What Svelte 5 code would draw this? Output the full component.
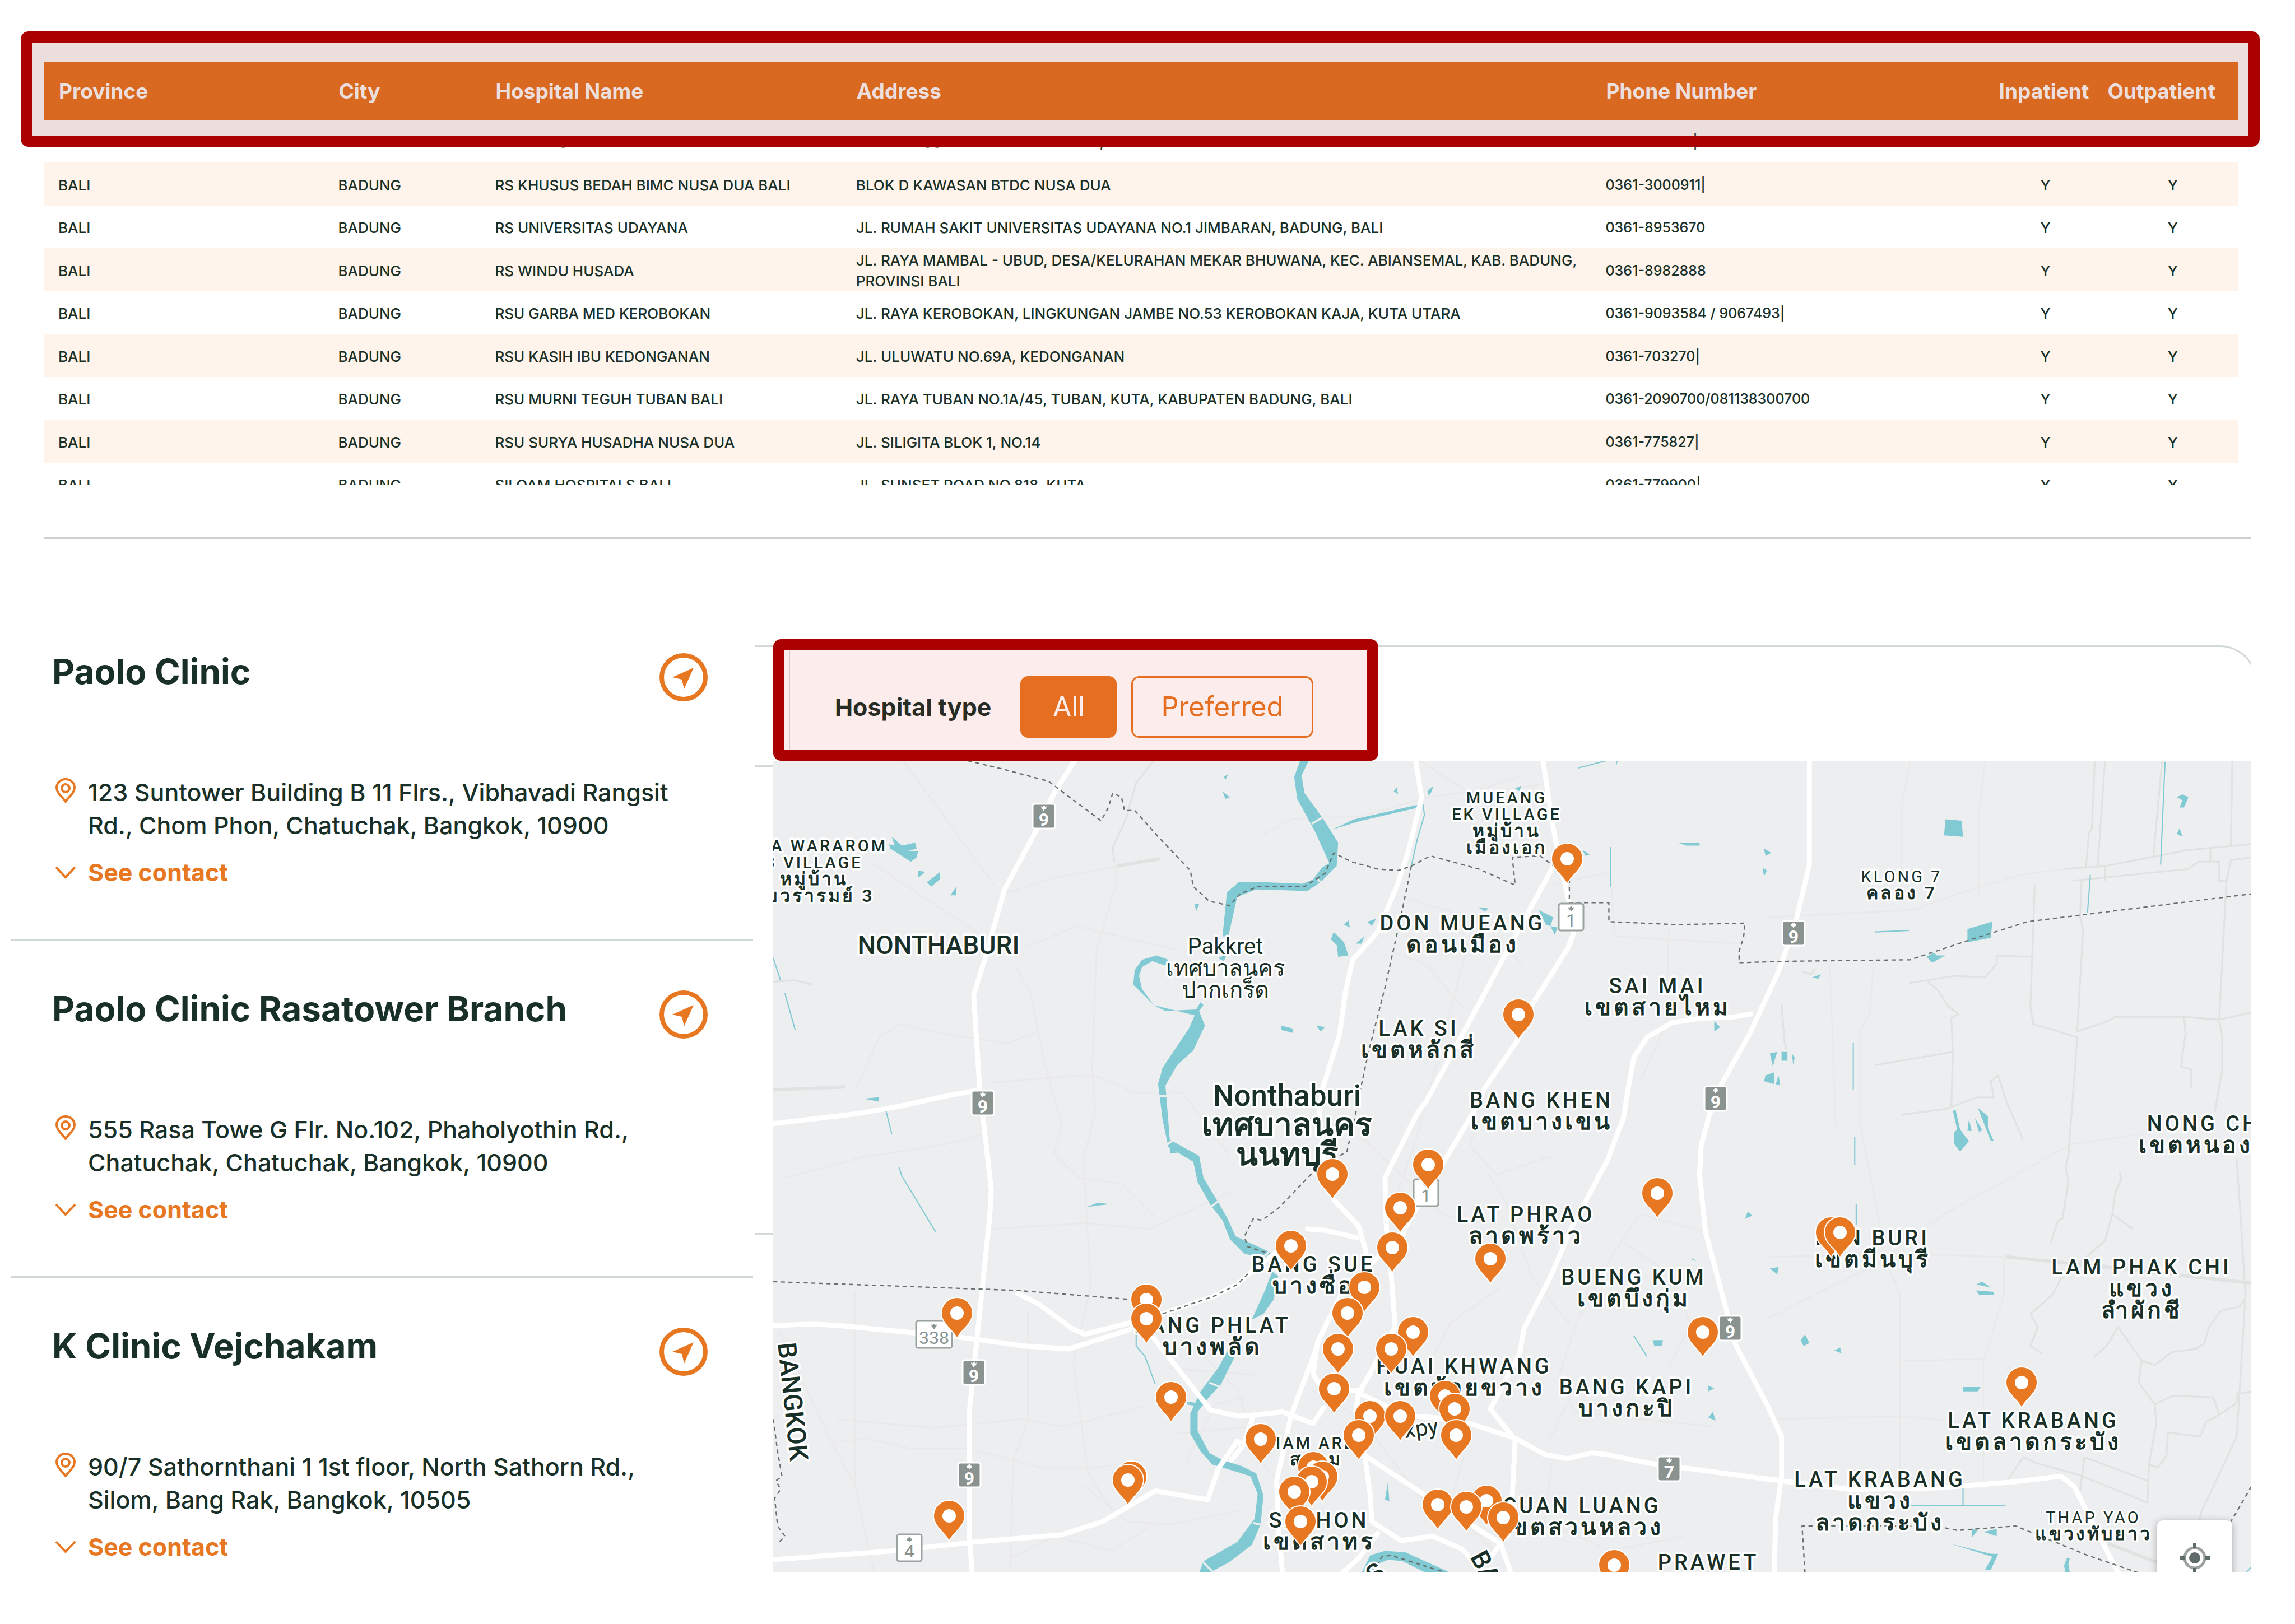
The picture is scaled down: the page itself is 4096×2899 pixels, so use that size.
<script lang="ts">
    interface Hospital {
        name: string;
        address: string;
        phone: string;
    }

    interface Clinic {
        name: string;
        address: string;
    }

    interface Label {
        x: number;
        y: number;
        kind: 'province' | 'city' | 'town' | 'district' | 'village' | 'khwaeng';
        lines: string[];
    }

    const hospitals: Hospital[] = [
        { name: 'BIMC HOSPITAL KUTA', address: 'JL. BY PASS NGURAH RAI NO.100X, KUTA', phone: '0361-761263|' },
        { name: 'RS KHUSUS BEDAH BIMC NUSA DUA BALI', address: 'BLOK D KAWASAN BTDC NUSA DUA', phone: '0361-3000911|' },
        { name: 'RS UNIVERSITAS UDAYANA', address: 'JL. RUMAH SAKIT UNIVERSITAS UDAYANA NO.1 JIMBARAN, BADUNG, BALI', phone: '0361-8953670' },
        { name: 'RS WINDU HUSADA', address: 'JL. RAYA MAMBAL - UBUD, DESA/KELURAHAN MEKAR BHUWANA, KEC. ABIANSEMAL, KAB. BADUNG, PROVINSI BALI', phone: '0361-8982888' },
        { name: 'RSU GARBA MED KEROBOKAN', address: 'JL. RAYA KEROBOKAN, LINGKUNGAN JAMBE NO.53 KEROBOKAN KAJA, KUTA UTARA', phone: '0361-9093584 / 9067493|' },
        { name: 'RSU KASIH IBU KEDONGANAN', address: 'JL. ULUWATU NO.69A, KEDONGANAN', phone: '0361-703270|' },
        { name: 'RSU MURNI TEGUH TUBAN BALI', address: 'JL. RAYA TUBAN NO.1A/45, TUBAN, KUTA, KABUPATEN BADUNG, BALI', phone: '0361-2090700/081138300700' },
        { name: 'RSU SURYA HUSADHA NUSA DUA', address: 'JL. SILIGITA BLOK 1, NO.14', phone: '0361-775827|' },
        { name: 'SILOAM HOSPITALS BALI', address: 'JL. SUNSET ROAD NO.818, KUTA', phone: '0361-779900|' },
    ];

    const clinics: Clinic[] = [
        { name: 'Paolo Clinic', address: '123 Suntower Building B 11 Flrs., Vibhavadi Rangsit Rd., Chom Phon, Chatuchak, Bangkok, 10900' },
        { name: 'Paolo Clinic Rasatower Branch', address: '555 Rasa Towe G Flr. No.102, Phaholyothin Rd., Chatuchak, Chatuchak, Bangkok, 10900' },
        { name: 'K Clinic Vejchakam', address: '90/7 Sathornthani 1 1st floor, North Sathorn Rd., Silom, Bang Rak, Bangkok, 10505' },
    ];

    let hospitalType = $state('All');

    // Map data lives in grid units; the visible window starts at (528, 520).
    const SCALE = 2.612;
    const px = (x: number) => Math.round((x - 528) * SCALE);
    const py = (y: number) => Math.round((y - 520) * SCALE);
    const isThai = (line: string) => /[\u0e00-\u0e7f]/.test(line);

    const faintRoads = [
        'M617 520 633 542 679 605', 'M597 591 667 637', 'M679 613 716 601 763 592', 'M700 648 735 633 803 649',
        'M762 590V606L749 648 746 729 748 760 740 792 745 879 733 931 743 1006 760 1033', 'M677 740 739 735 750 736 776 747H808L840 790',
        'M693 659 704 680 714 729 725 768 720 789 737 805 766 809 790 833', 'M536 805 589 791 647 782 672 775', 'M585 743 601 708 615 700 647 707 688 713 709 705',
        'M679 840 741 836 785 840 840 815', 'M532 910 568 986 584 1016 597 1075', 'M584 883V1016', 'M571 970 638 976 698 970 727 975 783 961',
        'M702 896V971L692 998 690 1075', 'M568 986 592 983 621 990 661 990 711 1003H750L783 997', 'M1305 520 1299 551V622', 'M1356 520 1352 556V612',
        'M1208 627 1307 622 1337 611 1380 598 1410 594', 'M1250 659 1254 769', 'M1280 657 1277 694 1271 703V769L1289 863 1298 885V1015', 'M1208 859 1296 857 1369 859',
        'M1208 901 1284 863 1328 830 1415 782 1465 775', 'M1355 1015V930L1369 885V859', 'M863 570 882 560 930 558 975 545 1010 540 1040 530', 'M970 520 1005 543 1054 536',
        'M930 777 985 830 1010 835', 'M1008 771 1004 783 1022 803 1060 790', 'M1017 803 1028 820 1046 872 1072 905', 'M1110 850 1140 870 1155 905 1140 935', 'M1165 842 1120 830 1100 860 1080 900',
        'M1060 605 1100 596 1103 640 1190 645', 'M1140 636 1138 700 1120 740', 'M956 612 1012 630 1040 660', 'M950 650 975 660 1000 690', 'M1004 640 970 770 940 860', 'M862 1000 890 1030 930 1040',
        'M896 950 930 970 960 1010 985 1040', 'M1000 995 990 1030 1020 1060', 'M1060 1000 1055 1040 1100 1060 1150 1050', 'M1070 960 1058 985', 'M1085 880 1065 940 1075 965 1170 975', 'M1025 880 990 905 975 935',
        'M810 915 845 950 860 990', 'M795 935 860 940', 'M803 980 856 975', 'M810 1000 830 960 850 955', 'M740 1015 770 1040 800 1042 850 1032', 'M690 1065 720 1050 760 1060 790 1040', 'M1298 930 1355 929', 'M1208 970 1298 968 1355 973',
    ];

    const greyRoads = [
        'M1431 520 1429 567 1427 569 1425 593', 'M1438 520 1433 592', 'M1477 520 1471 586', 'M1525 520 1524 578', 'M1410 594 1438 592 1495 581 1538 577',
        'M1416 602 1495 594 1502 589H1516V602H1521L1524 588 1538 586', 'M1438 592V602', 'M1510 580V589', 'M1521 602 1516 697', 'M1422 601 1421 627 1423 636 1419 705', 'M1390 605 1387 688 1389 700 1403 704 1419 709 1413 790',
        'M1419 705 1440 698 1445 695 1492 695 1516 697 1538 692', 'M1492 695 1493 706 1490 729 1497 731V744', 'M1516 697 1518 708V732L1513 760', 'M1304 672 1335 667 1356 668 1364 659V653L1387 654',
        'M1317 671 1324 677 1331 688 1338 693 1333 696 1334 719 1333 756', 'M1281 728 1334 719', 'M1299 762 1329 758 1351 750H1362L1360 739 1365 735 1371 754 1382 779', 'M1413 790 1411 798 1413 807 1409 833 1406 834 1401 849',
        'M1448 801 1449 806 1445 815 1443 830 1438 848 1408 874 1402 885 1387 898 1392 907 1387 920 1395 925', 'M1443 830 1457 840', 'M1528 792 1530 822 1534 885 1528 982 1504 1033 1502 1040', 'M1430 928 1439 920 1447 907 1463 930 1461 945 1472 960 1473 973 1468 1001 1467 1027 1420 1008 1391 1000 1382 996 1372 1011',
        'M1463 930 1472 933 1484 924 1500 922 1506 918 1509 907 1517 896 1530 893 1534 887', 'M1472 960 1484 954 1512 955 1516 967 1528 959V953L1538 951', 'M1468 1001 1474 1003 1480 995 1481 979 1503 982 1507 972 1516 967',
        'M1421 1019 1424 996 1467 1012', 'M1217 686 1219 712 1220 717', 'M1231 664 1237 666 1240 662', 'M788 520 776 535 769 560 760 579 761 589', 'M528 671 543 670 555 673',
    ];

    const heavyRoads = ['M763 592 792 587', 'M528 745 577 743', 'M1370 859 1438 866 1538 877', 'M1440 1055 1474 1068'];

    const highways = [
        'M734 520 720 542 707 569 686 608 673 654 665 680 669 743 677 813 676 831 671 879 669 898 662 965V1051L664 1075', 'M528 768 587 761 615 756 647 749 669 745',
        'M528 906 555 905 573 906 624 911 656 914 700 920 730 922 771 909 786 898', 'M695 884 709 891 732 908 741 912 772 904', 'M794 898 829 886 845 878 856 868 882 848',
        'M528 1066 610 1060 665 1054 725 1049 753 1040 789 1019 825 1025 832 1004 845 985 849 988 841 998', 'M786 912 801 931 827 964 847 968 876 965 897 973 904 962', 'M856 968 849 988',
        'M967 520 971 545 962 582 954 606 941 637 924 656 919 678 915 707 904 742 901 760 905 800 911 820 928 838 933 855 932 880', 'M893 840 906 841 927 846',
        'M1054 520 1061 566 1066 592 1072 617 1075 638 1071 648 1047 686 1036 712 1014 744 1006 761 988 791 960 839 950 868 953 907 934 942 928 952 926 965 931 994',
        'M1061 592 1029 651 992 720 974 753 968 761 946 805 947 840 950 868', 'M922 880 916 885 903 911 893 938 882 967 872 1012 873 1042 876 1075', 'M950 850 916 885 900 917 897 939 904 952 930 950',
        'M928 952 949 962 967 968 981 969 1004 973 1035 983 1055 994 1071 997 1087 993 1097 994 1126 1000 1208 1011 1264 1018 1323 1017 1374 1013 1408 1009 1417 1016 1429 1040 1447 1075',
        'M931 994 972 1021 1025 1055 1032 1075', 'M932 994 936 1022 937 1040 957 1053 979 1050 999 1059 1013 1075', 'M941 1048 928 1065 917 1075', 'M1025 1055 1017 1066',
        'M1196 693 1185 695 1162 696 1142 699 1125 709 1116 723 1112 745 1109 764 1098 793 1073 840 1059 873 1041 908 1038 925 1018 963 1035 984 1033 1022 1030 1050',
        'M1236 520V591L1226 633 1215 664 1195 707 1176 741 1168 761 1162 783 1161 803 1165 842 1180 898 1185 918 1208 962 1217 982V1009L1213 1037 1212 1075',
    ];

    const boundaries = [
        'M661 520 686 526 716 534 752 561 757 552 760 542 766 545 768 554H775L792 573 813 595 815 606 826 616 840 619 847 611 859 606H891L905 597 911 583 923 589 941 594 955 595 964 592 977 585 1010 594 1035 605 1033 586 1052 585 1072 600V617H1099V630L1146 632 1192 631 1191 641 1188 650V658L1224 657 1305 656 1344 643 1385 630 1538 611',
        'M964 592 957 626 946 675 935 718 930 741 926 761 920 787 898 800 873 826 862 834 856 833 850 845 852 852 867 857',
        'M528 876 695 882 783 889', 'M794 898 829 886 845 878 853 870', 'M528 970 531 992 534 1009 530 1012 533 1018 529 1024 531 1043 536 1050 531 1055',
        'M1233 1075 1231 1043H1323L1337 1046 1377 1043 1426 1063 1461 1075', 'M1538 1016 1524 1040', 'M940 1070 944 1064 950 1063 988 1075',
    ];

    // River reaches are filled shapes, since the water widens and narrows between bends.
    const water = [
        'M888 520 884 531 886 546 898 568 908 590 903 593 897 601 890 604 863 603 846 603 838 610 835 640 839 640 845 613 858 608 893 609 902 603 913 592 914 576 904 560 891 542 889 530 894 520Z',
        'M796 660 787 657 780 661 778 667 780 676 788 687 796 691 817 690 820 685 822 687 819 691 823 701 815 718 804 728 796 742 799 779 819 790 822 805 831 820 838 832 844 845 868 856 866 860 850 857 840 847 835 834 827 824 818 808 815 794 798 784 794 765 791 741 794 730 812 703 816 694 788 687 774 673 775 663 780 656 790 653 798 656Z',
        'M869 869 873 872 870 888 863 898 855 902 864 882Z', 'M838 924 843 928 834 946 824 957 818 965 818 978 826 993 835 998 848 1002 858 1007 863 1022 861 1042 855 1056 839 1068 826 1075H819L822 1067 845 1054 857 1038 859 1021 854 1009 845 1006 828 1001 820 992 813 980 813 966 820 951 832 935Z',
        'M930 1075 936 1063 946 1060 960 1061 991 1075H974L958 1067 948 1066 941 1069 937 1075Z', 'M910 567 925 560 969 550V552L930 561Z', 'M832 655 838 652 836 657Z',
        'M1329 560 1340 561 1341 572 1328 571Z', 'M1344 635 1361 630 1360 641 1344 644Z', 'M1316 654 1321 651 1323 653 1329 653 1320 658Z', 'M1487 545 1491 543 1495 545 1492 552H1489L1491 547Z', 'M1487 570 1489 566 1491 572Z', 'M1238 668 1244 666 1242 669Z',
        'M1217 719H1221V725H1217Z', 'M1209 720 1214 719 1211 729Z', 'M1224 720 1226 723 1225 728Z', 'M1206 735 1212 733V741L1205 739Z', 'M1215 735 1216 742 1213 741Z',
        'M1334 759H1336L1339 772 1345 780 1339 787 1335 782V774L1337 772Z', 'M1351 757 1358 763V771L1362 780H1360Z', 'M1345 765 1347 773H1344Z', 'M1349 764 1354 772 1352 774Z', 'M1350 878 1354 876 1360 880Z', 'M1350 882 1362 883V885H1352Z',
        'M1341 948H1353L1351 951H1341Z', 'M1230 916 1233 912 1236 918 1232 920Z', 'M1253 923 1257 921 1258 925Z', 'M1209 867 1215 866 1214 871Z', 'M1347 1045 1351 1046 1347 1051Z', 'M1355 1047 1364 1045V1050Z', 'M1332 1055 1360 1062 1365 1062 1360 1073 1356 1073 1361 1064Z', 'M1412 1065H1414L1413 1069 1414 1075H1411L1410 1070Z',
        'M609 572 616 578 625 576 626 580 619 582H627L626 586 622 589 608 580 607 577 611 578Z', 'M627 595 632 596 627 600Z', 'M642 596V601L636 606 633 603Z', 'M653 606V612H649Z', 'M836 531 839 529 837 533Z', 'M835 541 840 545 837 546Z', 'M816 618H819L817 623Z', 'M590 751 600 750V753Z', 'M742 825 750 822 758 823 750 824Z', 'M799 784 804 788H799Z',
        'M952 541 954 538 955 543Z', 'M979 537 978 541 976 544 975 541Z', 'M1035 539 1039 537 1038 541Z', 'M1081 581 1086 584 1083 585Z', 'M1146 576H1161V578H1152Z', 'M1205 580 1210 583 1206 585Z', 'M1204 593 1207 595 1205 599Z', 'M1104 520H1105L1104 524Z', 'M1010 620 1017 621 1014 623Z', 'M1051 622 1061 627 1059 633 1056 632Z', 'M1059 633 1064 634 1062 639Z', 'M934 630 940 628 937 633Z', 'M918 632 921 629 922 634Z', 'M911 637 918 644 921 653 914 654 913 646 909 642Z', 'M932 640 930 645 926 645Z', 'M875 701 883 703V706L875 704Z', 'M899 701 905 702 902 705Z', 'M1171 698 1175 702 1171 705Z',
        'M1194 828 1197 831 1192 833Z', 'M1129 916H1136L1135 920H1130Z', 'M1156 860 1159 862 1156 861Z', 'M1167 947 1171 949 1167 951Z', 'M1170 965 1172 971 1167 969Z', 'M948 1013 949 1026 946 1025Z', 'M811 958 818 959 817 961 811 960Z',
    ];

    const canals = [
        'M1266 713V745', 'M1479 521 1476 591', 'M1428 598 1426 624', 'M1267 777V796', 'M1268 823V837', 'M1341 1017V1029', 'M1304 1029H1370', 'M528 655 533 670', 'M536 679 543 704', 'M605 759 609 775', 'M614 798 616 804 639 842',
        'M972 550 973 557 968 574 964 592', 'M1100 579V606', 'M1078 525 1097 520', 'M1116 913 1125 927', 'M776 912V920L782 927 789 946', 'M1281 637 1304 636', 'M1534 1075 1538 1071',
    ];

    const bridges = ['M896 563 908 556', 'M900 601 906 607', 'M788 749H802', 'M794 785 805 776', 'M823 828 836 818', 'M862 860 870 853', 'M826 945 838 950', 'M856 1041 866 1043', 'M820 1066 828 1074'];

    const labels: Label[] = [
        { x: 556, y: 582, kind: 'village', lines: ['PIYA WARAROM', '3 VILLAGE', 'หมู่บ้าน', 'ปิยวรารมย์ 3'] },
        { x: 641, y: 652, kind: 'province', lines: ['NONTHABURI'] },
        { x: 837, y: 652, kind: 'town', lines: ['Pakkret', 'เทศบาลนคร', 'ปากเกร็ด'] },
        { x: 879, y: 756, kind: 'city', lines: ['Nonthaburi', 'เทศบาลนคร', 'นนทบุรี'] },
        { x: 1029, y: 549, kind: 'village', lines: ['MUEANG', 'EK VILLAGE', 'หมู่บ้าน', 'เมืองเอก'] },
        { x: 1299, y: 603, kind: 'khwaeng', lines: ['KLONG 7', 'คลอง 7'] },
        { x: 999, y: 636, kind: 'district', lines: ['DON MUEANG', 'ดอนเมือง'] },
        { x: 1132, y: 679, kind: 'district', lines: ['SAI MAI', 'เขตสายไหม'] },
        { x: 969, y: 708, kind: 'district', lines: ['LAK SI', 'เขตหลักสี่'] },
        { x: 1053, y: 757, kind: 'district', lines: ['BANG KHEN', 'เขตบางเขน'] },
        { x: 1517, y: 773, kind: 'district', lines: ['NONG CHOK', 'เขตหนองจอก'] },
        { x: 1042, y: 835, kind: 'district', lines: ['LAT PHRAO', 'ลาดพร้าว'] },
        { x: 897, y: 869, kind: 'district', lines: ['BANG SUE', 'บางซื่อ'] },
        { x: 1116, y: 878, kind: 'district', lines: ['BUENG KUM', 'เขตบึงกุ่ม'] },
        { x: 1279, y: 851, kind: 'district', lines: ['MIN BURI', 'เขตมีนบุรี'] },
        { x: 1463, y: 871, kind: 'district', lines: ['LAM PHAK CHI', 'แขวง', 'ลำผักชี'] },
        { x: 828, y: 911, kind: 'district', lines: ['BANG PHLAT', 'บางพลัด'] },
        { x: 1000, y: 939, kind: 'district', lines: ['HUAI KHWANG', 'เขตห้วยขวาง'] },
        { x: 1111, y: 953, kind: 'district', lines: ['BANG KAPI', 'บางกะปิ'] },
        { x: 1389, y: 976, kind: 'district', lines: ['LAT KRABANG', 'เขตลาดกระบัง'] },
        { x: 1284, y: 1016, kind: 'district', lines: ['LAT KRABANG', 'แขวง', 'ลาดกระบัง'] },
        { x: 899, y: 990, kind: 'village', lines: ['SIAM AREA', 'สยาม'] },
        { x: 901, y: 1044, kind: 'district', lines: ['SATHON', 'เขตสาทร'] },
        { x: 1081, y: 1034, kind: 'district', lines: ['SUAN LUANG', 'เขตสวนหลวง'] },
        { x: 1430, y: 1041, kind: 'khwaeng', lines: ['THAP YAO', 'แขวงทับยาว'] },
        { x: 1167, y: 1073, kind: 'district', lines: ['PRAWET'] },
    ];

    const pitch = { province: 52, city: 53, town: 39, district: 39, village: 30, khwaeng: 30 };

    const streetNames = [
        { x: 531, y: 918, turn: 84, text: 'BANGKOK', kind: 'province' },
        { x: 1004, y: 1064, turn: 62, text: 'BANGKOK', kind: 'province' },
        { x: 939, y: 1083, turn: -40, text: 'S', kind: 'province' },
        { x: 960, y: 983, turn: -8, text: 'xpy', kind: 'town' },
    ];

    const shields = [
        { x: 713, y: 558, text: '9', dark: true },
        { x: 671, y: 754, text: '9', dark: true },
        { x: 665, y: 938, text: '9', dark: true },
        { x: 662, y: 1008, text: '9', dark: true },
        { x: 1225, y: 638, text: '9', dark: true },
        { x: 1172, y: 751, text: '9', dark: true },
        { x: 1182, y: 908, text: '9', dark: true },
        { x: 1140, y: 1004, text: '7', dark: true },
        { x: 1073, y: 627, text: '1', dark: false },
        { x: 974, y: 815, text: '1', dark: false },
        { x: 621, y: 1058, text: '4', dark: false },
        { x: 638, y: 912, text: '338', dark: false },
    ];

    const pins = [
        [1070.5, 587], [1037, 693.5], [975.6, 796], [910, 802.6], [1132.2, 815.4], [956.3, 825.7], [1250.8, 842.5], [1256.8, 842.5],
        [881.9, 851.4], [951.2, 852.6], [1018, 860.3], [931.9, 879.7], [783, 888.3], [653.5, 897.6], [920.4, 897.6], [783, 901.4],
        [965.3, 910.4], [1163, 910.4], [950.1, 921.8], [913.9, 921.8], [1381.1, 945.1], [911.4, 949.1], [986.9, 954], [799.7, 955.1],
        [993.6, 963], [935.6, 968.1], [956.3, 968.1], [994.7, 980.8], [928, 981], [861.2, 983.5], [896.9, 1002.9], [903.3, 1009.3],
        [772.5, 1009.4], [770.2, 1011.7], [896, 1012.9], [884.2, 1019.5], [1015.4, 1025.9], [982, 1028.6], [1001.4, 1029.8], [648.2, 1036.2],
        [1027, 1037.3], [888.4, 1039.9], [1102.7, 1069.7],
    ];
</script>

<main>
    <section class="directory">
        <div class="scroller">
            <table>
                <colgroup>
                    <col class="c-province" /><col class="c-city" /><col class="c-name" /><col class="c-address" />
                    <col class="c-phone" /><col class="c-in" /><col class="c-out" />
                </colgroup>
                <thead>
                    <tr>
                        <th>Province</th>
                        <th>City</th>
                        <th>Hospital Name</th>
                        <th>Address</th>
                        <th>Phone Number</th>
                        <th>Inpatient</th>
                        <th>Outpatient</th>
                    </tr>
                </thead>
                <tbody>
                    {#each hospitals as hospital}
                        <tr>
                            <td>BALI</td>
                            <td>BADUNG</td>
                            <td>{hospital.name}</td>
                            <td>{hospital.address}</td>
                            <td class="phone">{hospital.phone}</td>
                            <td class="flag">Y</td>
                            <td class="flag">Y</td>
                        </tr>
                    {/each}
                </tbody>
            </table>
        </div>
        <div class="marker marker-head"></div>
    </section>

    <hr />

    <section class="finder">
        <ul class="clinics">
            {#each clinics as clinic}
                <li>
                    <div class="clinic-head">
                        <h2>{clinic.name}</h2>
                        <button class="direction" type="button" aria-label="Directions">
                            <svg viewBox="0 0 88 88">
                                <circle cx="44" cy="44" r="39" fill="none" stroke="#e87722" stroke-width="8" />
                                <path d="M62 27 45 65 41 48 24 44Z" fill="#e87722" />
                            </svg>
                        </button>
                    </div>
                    <p class="address">
                        <svg viewBox="0 0 36 44">
                            <path d="M18 42C13 34 2 27 2 17a16 15 0 0 1 32 0c0 10-11 17-16 25Z" />
                            <circle cx="18" cy="18" r="7" />
                        </svg>
                        <span>{clinic.address}</span>
                    </p>
                    <button class="contact" type="button">
                        <svg viewBox="0 0 36 44"><path d="M1 13 18 31 35 13" /></svg>
                        See contact
                    </button>
                </li>
            {/each}
        </ul>

        <div class="gutter">
            <div></div>
            <div class="tall"></div>
            <div></div>
        </div>

        <div class="map-side">
            <div class="filter-wrap">
                <div class="filter">
                    <span class="filter-label">Hospital type</span>
                    {#each ['All', 'Preferred'] as type}
                        <button
                            type="button"
                            class:active={hospitalType === type}
                            onclick={() => (hospitalType = type)}
                        >{type}</button>
                    {/each}
                </div>
                <div class="marker marker-filter"></div>
            </div>

            <div class="map">
                <svg class="canvas" viewBox="0 0 2638 1449">
                    <g transform="scale({SCALE}) translate(-528 -520)" fill="none" stroke-linejoin="round">
                        <g stroke="#e9e9ea">{#each faintRoads as d}<path {d} />{/each}</g>
                        <g stroke="#e0e2e1" stroke-width="1.2">{#each greyRoads as d}<path {d} />{/each}</g>
                        <g stroke="#dfe2e1" stroke-width="2.2">{#each heavyRoads as d}<path {d} />{/each}</g>
                        <g fill="#82cad3">{#each water as d}<path {d} />{/each}</g>
                        <g stroke="#82cad3" stroke-width="0.8">{#each canals as d}<path {d} />{/each}</g>
                        <g stroke="#eceded" stroke-width="1.4">{#each bridges as d}<path {d} />{/each}</g>
                        <g stroke="#fff" stroke-width="3.4" stroke-linecap="round">{#each highways as d}<path {d} />{/each}</g>
                        <g stroke="#66716e" stroke-width="0.9" stroke-dasharray="2.8 2.4">{#each boundaries as d}<path {d} />{/each}</g>
                    </g>

                    {#each shields as { x, y, text, dark }}
                        {@const half = text.length > 1 ? 32 : dark ? 20 : 22}
                        <g class="shield" class:dark transform="translate({px(x)} {py(y)})">
                            <rect x={-half} y={dark ? -22 : -24} width={half * 2} height={dark ? 44 : 48} rx="4" />
                            <path d="M-5-18-3-16-1-19H1L3-16 5-18 4-13 1-12V-10H-1V-12L-4-13Z" />
                            <text y="17">{text}</text>
                        </g>
                    {/each}

                    {#each labels as { x, y, kind, lines }}
                        <text class={kind}>
                            {#each lines as line, i}<tspan class:thai={isThai(line)} x={px(x)} y={py(y) + i * pitch[kind]}>{line}</tspan>{/each}
                        </text>
                    {/each}

                    {#each streetNames as { x, y, turn, text, kind }}
                        <text class="{kind} turned" transform="translate({px(x)} {py(y)}) rotate({turn})">{text}</text>
                    {/each}

                    {#each pins as [x, y]}
                        <g transform="translate({px(x)} {py(y)})">
                            <path d="M0 45C-8 29-28 19-28 0A28 28 0 0 1 28 0C28 19 8 29 0 45Z" fill="#e87722" stroke="#fff" stroke-width="2" />
                            <circle r="12" fill="#fff" />
                        </g>
                    {/each}
                </svg>

                <button class="locate" type="button" aria-label="My location">
                    <svg viewBox="0 0 56 56">
                        <circle cx="28" cy="28" r="18" fill="none" stroke="#9aa19f" stroke-width="5" />
                        <circle cx="28" cy="28" r="10" fill="#5f6b68" />
                        <path d="M28 1V10M28 46V55M1 28H10M46 28H55" stroke="#5f6b68" stroke-width="6" />
                    </svg>
                </button>
            </div>
        </div>
    </section>
</main>

<style>
    :global(body) {
        margin: 0;
        background: #fff;
    }

    main {
        font-family: Inter, 'Liberation Sans', sans-serif;
        font-weight: 500;
        color: #183028;
        overflow: hidden;
    }

    button {
        font: inherit;
        cursor: pointer;
    }

    .directory {
        position: relative;
        padding: 111px 101px 0 78px;
    }

    .scroller {
        height: 755px;
        overflow: hidden;
    }

    table {
        width: 100%;
        table-layout: fixed;
        border-collapse: collapse;
        font-size: 26px;
        line-height: 37px;
    }

    .c-province {
        width: 12.75%;
    }

    .c-city {
        width: 7.15%;
    }

    .c-name {
        width: 16.45%;
    }

    .c-address {
        width: 34.15%;
    }

    .c-phone {
        width: 17.9%;
    }

    .c-in {
        width: 4.95%;
    }

    .c-out {
        width: 6.65%;
    }

    th {
        height: 103px;
        padding: 0 0 0 27px;
        background: #e87722;
        color: #fff;
        font-size: 37px;
        font-weight: 700;
        text-align: left;
        white-space: nowrap;
    }

    td {
        box-sizing: border-box;
        height: 76px;
        padding: 3px 0 0 26px;
    }

    tbody tr:nth-child(even) td {
        height: 77px;
        background: #fff4ec;
    }

    td.phone {
        font-size: 25px;
    }

    td.flag {
        text-align: center;
    }

    .marker {
        position: absolute;
        box-sizing: border-box;
        border: 20px solid #ab0000;
        border-radius: 14px;
        pointer-events: none;
    }

    .marker-head {
        top: 56px;
        left: 37px;
        right: 63px;
        height: 206px;
        background: rgba(130, 20, 20, 0.14);
    }

    .marker-filter {
        inset: 0 auto 0 0;
        width: 1080px;
        background: rgba(220, 10, 10, 0.08);
    }

    hr {
        margin: 93px 78px 0;
        border: 0;
        border-top: 3px solid #d0d0d0;
    }

    .finder {
        display: grid;
        grid-template-columns: 1328fr 32px 2638fr;
        padding: 0 78px 0 20px;
        margin-top: 115px;
    }

    .clinics {
        margin: 0 4px 0 0;
        padding: 0;
        list-style: none;
    }

    li {
        box-sizing: border-box;
        height: 602px;
        padding: 86px 80px 0 73px;
        border-bottom: 3px solid #d0d8d6;
    }

    li:last-child {
        border-bottom: 0;
    }

    .clinic-head {
        display: flex;
        justify-content: space-between;
        align-items: flex-start;
        height: 222px;
    }

    h2 {
        margin: 0;
        font-size: 62px;
        font-weight: 700;
        line-height: 72px;
    }

    .direction {
        width: 88px;
        height: 88px;
        margin-top: 2px;
        padding: 0;
        border: 0;
        background: none;
    }

    .direction svg,
    .canvas,
    .locate svg {
        display: block;
    }

    .address {
        display: flex;
        gap: 22px;
        width: 1110px;
        margin: 0;
        padding-left: 6px;
        font-size: 43px;
        line-height: 59px;
    }

    .address svg,
    .contact svg {
        flex: none;
        width: 36px;
        height: 44px;
        fill: none;
        stroke: #e87722;
        stroke-width: 4px;
    }

    .address svg {
        margin-top: 4px;
    }

    .contact {
        display: flex;
        align-items: center;
        gap: 22px;
        margin-top: 24px;
        padding: 0 0 0 6px;
        border: 0;
        background: none;
        color: #e87722;
        font-size: 43px;
        font-weight: 700;
        line-height: 60px;
    }

    .gutter {
        display: flex;
        flex-direction: column;
        padding-top: 75px;
    }

    .gutter div {
        height: 211px;
        border-top: 3px solid #d3dad8;
    }

    .gutter .tall {
        height: 832px;
    }

    .map-side {
        padding-top: 64px;
    }

    .filter-wrap {
        position: relative;
        box-sizing: border-box;
        height: 217px;
        padding: 11px 0 0 28px;
        overflow: hidden;
    }

    .filter {
        display: flex;
        align-items: center;
        gap: 26px;
        box-sizing: border-box;
        height: 240px;
        margin-right: -10px;
        padding: 0 0 24px 80px;
        border: solid #d3dad8;
        border-width: 3px 3px 0 2px;
        border-radius: 0 66px 0 0;
    }

    .filter-label {
        margin-right: 26px;
        font-size: 43px;
        font-weight: 700;
    }

    .filter button {
        min-width: 172px;
        height: 110px;
        padding: 0 50px;
        border: 3px solid #e87722;
        border-radius: 14px;
        background: none;
        color: #e87722;
        font-size: 49px;
        font-weight: 400;
    }

    .filter button.active {
        background: #e87722;
        color: #fff;
    }

    .map {
        position: relative;
        overflow: hidden;
        background: #edeef0;
    }

    .canvas {
        width: 100%;
        font-family: Roboto, 'Noto Sans', sans-serif;
    }

    .canvas text {
        text-anchor: middle;
        font-weight: 500;
        fill: #183028;
        stroke: #fff;
        stroke-width: 7px;
        stroke-linejoin: round;
        paint-order: stroke;
    }

    .canvas .turned {
        text-anchor: start;
    }

    .canvas .province {
        font-size: 46px;
    }

    .canvas .city {
        font-size: 53px;
    }

    .canvas .town {
        font-size: 40px;
        font-weight: 400;
    }

    .canvas .district {
        font-size: 38px;
        letter-spacing: 5px;
    }

    .canvas .village,
    .canvas .khwaeng {
        font-size: 29px;
        letter-spacing: 4px;
    }

    .canvas .khwaeng {
        font-weight: 400;
    }

    .thai {
        font-weight: 600;
    }

    .city .thai {
        font-size: 57px;
    }

    .town .thai {
        font-weight: 400;
    }

    .district .thai {
        font-size: 41px;
    }

    .village .thai,
    .khwaeng .thai {
        font-size: 32px;
    }

    .shield rect {
        fill: #fff;
        stroke: #9aa3a0;
        stroke-width: 3px;
    }

    .shield path {
        fill: #8a9490;
    }

    .canvas .shield text {
        font-size: 32px;
        font-weight: 400;
        fill: #87918d;
        stroke: none;
    }

    .shield.dark rect {
        fill: #8a938f;
        stroke: #fff;
    }

    .shield.dark path {
        fill: #fff;
    }

    .canvas .shield.dark text {
        fill: #fff;
        font-weight: 700;
    }

    .locate {
        position: absolute;
        right: 34px;
        bottom: -41px;
        display: grid;
        place-items: center;
        width: 134px;
        height: 134px;
        padding: 0;
        border: 0;
        border-radius: 10px;
        background: #fff;
        box-shadow: 0 2px 14px rgba(0, 0, 0, 0.3);
    }

    .locate svg {
        width: 56px;
        height: 56px;
    }
</style>
